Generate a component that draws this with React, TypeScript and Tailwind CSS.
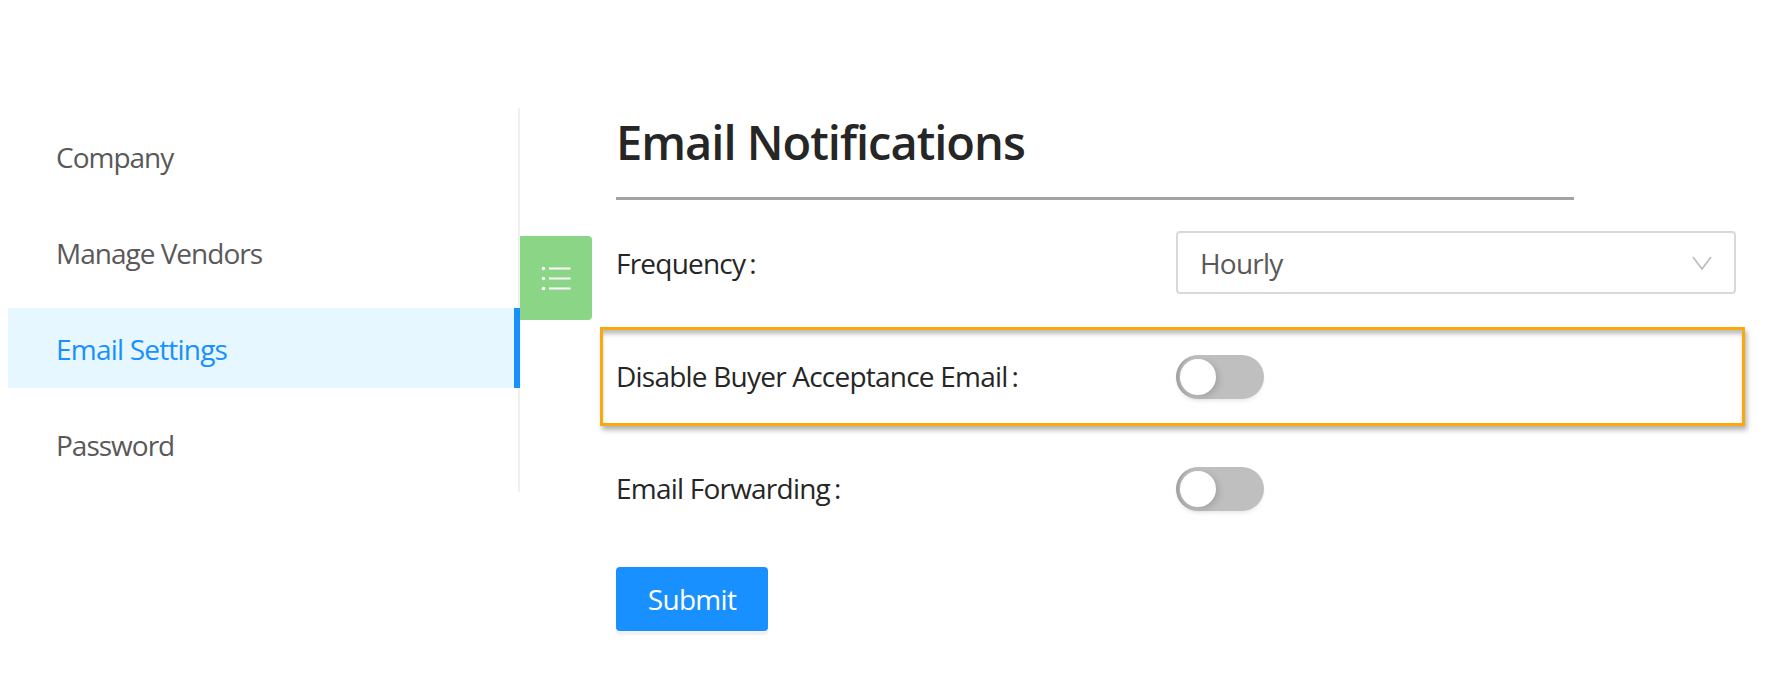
const font = "font-['Open_Sans',sans-serif]";

const menu = ["Company", "Manage Vendors", "Email Settings", "Password"];

const Toggle = () => (
  <button className="flex h-[44px] w-[88px] items-center rounded-full bg-[#bfbfbf] pl-[4px] shadow-[inset_5px_0_3px_-2px_rgba(0,0,0,0.16),0_3px_5px_-2px_rgba(0,0,0,0.12)]">
    <span className="block h-[36px] w-[36px] rounded-full bg-white shadow-[3px_2px_6px_rgba(0,0,0,0.14)]" />
  </button>
);

const Label = ({ text, className = "" }: { text: string; className?: string }) => (
  <label className={`w-[560px] shrink-0 text-[28px] tracking-[-0.78px] text-[#262626] ${className}`}>
    {text}
    <span className="ml-[4px]">:</span>
  </label>
);

export default function App() {
  return (
    <div className={`flex h-[685px] w-[1773px] overflow-hidden bg-white ${font}`}>
      <nav className="ml-[8px] mt-[108px] h-[384px] w-[512px] shrink-0 border-r-2 border-[#f0f0f0] pt-[8px]">
        <ul className="flex w-[512px] flex-col gap-[16px]">
          {menu.map((item) =>
            item === "Email Settings" ? (
              <li
                key={item}
                className="flex h-[80px] items-center border-r-[6px] border-[#1890ff] bg-[#e6f7ff] pl-[48px] pt-[1px] text-[28px] tracking-[-0.8px] text-[#1890ff]"
              >
                {item}
              </li>
            ) : (
              <li
                key={item}
                className="flex h-[80px] items-center pl-[48px] pt-[2px] text-[28px] tracking-[-1px] text-[#595959]"
              >
                {item}
              </li>
            ),
          )}
        </ul>
      </nav>

      <div className="mt-[236px] flex h-[84px] w-[72px] shrink-0 items-center justify-center rounded-r-[4px] bg-[#8bd586]">
        <svg width="30" height="24" viewBox="0 0 30 24" fill="none">
          <circle cx="2.5" cy="2.5" r="1.8" fill="#fff" />
          <circle cx="2.5" cy="12.5" r="1.8" fill="#fff" />
          <circle cx="2.5" cy="22.5" r="1.8" fill="#fff" />
          <path d="M8 2.5h21.5M8 12.5h21.5M8 22.5h21.5" stroke="#fff" strokeWidth="2" />
        </svg>
      </div>

      <main className="ml-[24px] w-[1120px] shrink-0">
        <h1 className="mt-[111px] h-[62px] text-[47px] leading-[62px] font-semibold tracking-[-1px] text-[#262626]">
          Email Notifications
        </h1>
        <div className="mt-[24px] h-[3px] w-[958px] bg-[#a3a3a3]" />

        <div className="mt-[31px] flex h-[63px] items-center">
          <Label text="Frequency" />
          <div className="flex h-[63px] w-[560px] items-center justify-between rounded-[4px] border-2 border-[#d9d9d9] pl-[22px] pr-[22px] text-[28px] tracking-[-0.8px] text-[#595959]">
            Hourly
            <svg width="20" height="14" viewBox="0 0 20 14" fill="none">
              <path d="M1 1l9 12 9-12" stroke="#bfbfbf" strokeWidth="1.8" />
            </svg>
          </div>
        </div>

        <div className="relative mt-[61px] flex h-[44px] items-center">
          <Label text="Disable Buyer Acceptance Email" className="pb-[2px]" />
          <Toggle />
          <div className="pointer-events-none absolute -left-[16px] -top-[28px] h-[99px] w-[1145px] border-[3px] border-[#f8a90c] shadow-[2px_4px_5px_rgba(0,0,0,0.3),inset_0_5px_4px_-1px_rgba(0,0,0,0.26)]" />
        </div>

        <div className="mt-[68px] flex h-[44px] items-center">
          <Label text="Email Forwarding" className="pb-[2px]" />
          <Toggle />
        </div>

        <button className="mt-[56px] h-[64px] w-[152px] rounded-[4px] bg-[#1890ff] text-[28px] tracking-[-0.7px] text-white shadow-[0_4px_0_#f2f2f2]">
          Submit
        </button>
      </main>
    </div>
  );
}
